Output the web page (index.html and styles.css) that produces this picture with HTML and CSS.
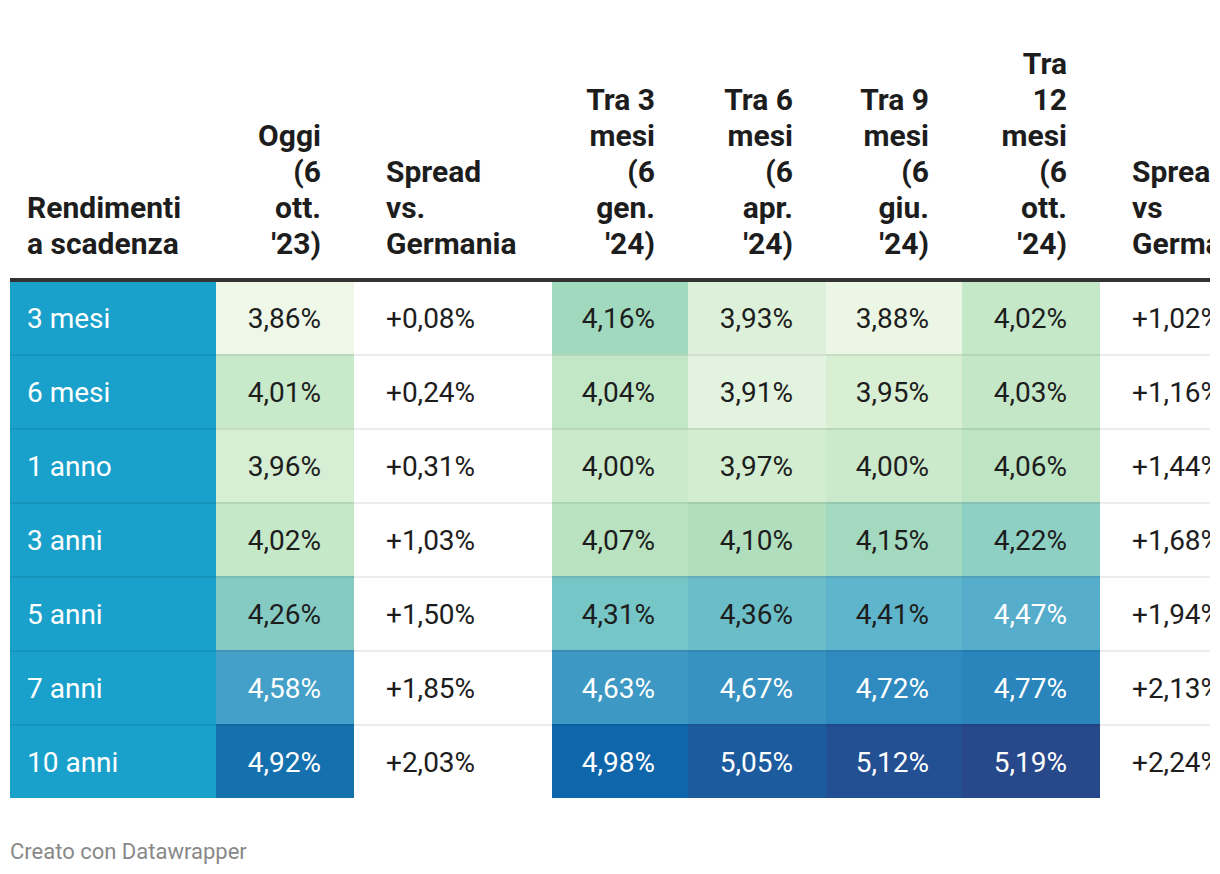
FILE: index.html
```html
<!DOCTYPE html>
<html lang="it">
<head>
<meta charset="utf-8">
<title>Rendimenti a scadenza</title>
<link rel="stylesheet" href="styles.css">
</head>
<body>
<div class="chart">
  <div class="table-wrap">
    <table class="dw-table">
      <colgroup>
        <col class="c-name"><col class="c-w138"><col class="c-spread"><col class="c-w136"><col class="c-w138"><col class="c-w136"><col class="c-w138"><col class="c-last">
      </colgroup>
      <thead>
        <tr>
          <th class="name">Rendimenti<br>a scadenza</th>
          <th class="num">Oggi<br>(6<br>ott.<br>'23)</th>
          <th class="txt">Spread<br>vs.<br>Germania</th>
          <th class="num">Tra 3<br>mesi<br>(6<br>gen.<br>'24)</th>
          <th class="num">Tra 6<br>mesi<br>(6<br>apr.<br>'24)</th>
          <th class="num">Tra 9<br>mesi<br>(6<br>giu.<br>'24)</th>
          <th class="num">Tra<br>12<br>mesi<br>(6<br>ott.<br>'24)</th>
          <th class="txt">Spread<br>vs<br>Germania</th>
        </tr>
      </thead>
      <tbody>
        <tr>
          <td class="name">3 mesi</td>
          <td class="num" style="background:#eff8e8">3,86%</td>
          <td class="txt">+0,08%</td>
          <td class="num" style="background:#a1d9bf">4,16%</td>
          <td class="num" style="background:#ddf1da">3,93%</td>
          <td class="num" style="background:#ecf6e5">3,88%</td>
          <td class="num" style="background:#c5e8c9">4,02%</td>
          <td class="txt">+1,02%</td>
        </tr>
        <tr>
          <td class="name">6 mesi</td>
          <td class="num" style="background:#c8e9ca">4,01%</td>
          <td class="txt">+0,24%</td>
          <td class="num" style="background:#c2e7c7">4,04%</td>
          <td class="num" style="background:#e2f3df">3,91%</td>
          <td class="num" style="background:#d8efd4">3,95%</td>
          <td class="num" style="background:#c4e7c8">4,03%</td>
          <td class="txt">+1,16%</td>
        </tr>
        <tr>
          <td class="name">1 anno</td>
          <td class="num" style="background:#d6eed4">3,96%</td>
          <td class="txt">+0,31%</td>
          <td class="num" style="background:#cbe9cb">4,00%</td>
          <td class="num" style="background:#d2edd0">3,97%</td>
          <td class="num" style="background:#cbe9cb">4,00%</td>
          <td class="num" style="background:#bde4c3">4,06%</td>
          <td class="txt">+1,44%</td>
        </tr>
        <tr>
          <td class="name">3 anni</td>
          <td class="num" style="background:#c5e8c9">4,02%</td>
          <td class="txt">+1,03%</td>
          <td class="num" style="background:#b9e3c0">4,07%</td>
          <td class="num" style="background:#b1dfbd">4,10%</td>
          <td class="num" style="background:#a3d9bf">4,15%</td>
          <td class="num" style="background:#8fd0c4">4,22%</td>
          <td class="txt">+1,68%</td>
        </tr>
        <tr>
          <td class="name">5 anni</td>
          <td class="num" style="background:#85cbc4">4,26%</td>
          <td class="txt">+1,50%</td>
          <td class="num" style="background:#76c5c7">4,31%</td>
          <td class="num" style="background:#6bbec8">4,36%</td>
          <td class="num" style="background:#5fb5cb">4,41%</td>
          <td class="num light" style="background:#56adcb">4,47%</td>
          <td class="txt">+1,94%</td>
        </tr>
        <tr>
          <td class="name">7 anni</td>
          <td class="num light" style="background:#44a0c8">4,58%</td>
          <td class="txt">+1,85%</td>
          <td class="num light" style="background:#3d98c4">4,63%</td>
          <td class="num light" style="background:#3792c1">4,67%</td>
          <td class="num light" style="background:#2f8bbf">4,72%</td>
          <td class="num light" style="background:#2985bc">4,77%</td>
          <td class="txt">+2,13%</td>
        </tr>
        <tr>
          <td class="name">10 anni</td>
          <td class="num light" style="background:#1570ae">4,92%</td>
          <td class="txt">+2,03%</td>
          <td class="num light" style="background:#0f66aa">4,98%</td>
          <td class="num light" style="background:#1c5c9e">5,05%</td>
          <td class="num light" style="background:#234f93">5,12%</td>
          <td class="num light" style="background:#27488a">5,19%</td>
          <td class="txt">+2,24%</td>
        </tr>
      </tbody>
    </table>
  </div>
  <div class="footer">Creato con Datawrapper</div>
</div>
</body>
</html>
```

FILE: styles.css
```css
html, body {
  margin: 0;
  padding: 0;
  background: #ffffff;
}

body {
  font-family: Roboto, "Liberation Sans", Arial, sans-serif;
  color: #1d1d1d;
}

.chart {
  padding: 30px 10px 0 10px;
}

.table-wrap {
  width: 1200px;
  overflow: hidden;
}

.dw-table {
  table-layout: fixed;
  border-collapse: separate;
  border-spacing: 0;
  width: 1290px;
}

.c-name { width: 206px; }
.c-w138 { width: 138px; }
.c-w136 { width: 136px; }
.c-spread { width: 198px; }
.c-last { width: 200px; }

.dw-table th {
  font-size: 30px;
  line-height: 36px;
  font-weight: 700;
  color: #1d1d1d;
  vertical-align: bottom;
  white-space: nowrap;
  padding: 16px 32px 16px 32px;
  border-bottom: 4px solid #333333;
}

.dw-table td {
  font-size: 28px;
  line-height: 36px;
  font-weight: 400;
  color: #1d1d1d;
  height: 72px;
  box-sizing: border-box;
  padding: 1px 32px 0 32px;
  white-space: nowrap;
  vertical-align: middle;
}

.dw-table tbody tr + tr td {
  height: 74px;
  border-top: 2px solid rgba(0, 0, 0, 0.075);
}

.dw-table .name {
  text-align: left;
  padding-left: 17px;
  padding-right: 10px;
}

.dw-table td.name {
  background: #19a1cc;
  color: #ffffff;
}

.dw-table .num {
  text-align: right;
  padding-right: 33px;
  padding-left: 10px;
}

.dw-table .txt {
  text-align: left;
  padding-left: 32px;
  padding-right: 0;
}

.dw-table td.light {
  color: #ffffff;
}

.footer {
  margin-top: 41px;
  font-size: 22px;
  line-height: 26px;
  color: #888888;
}
```
